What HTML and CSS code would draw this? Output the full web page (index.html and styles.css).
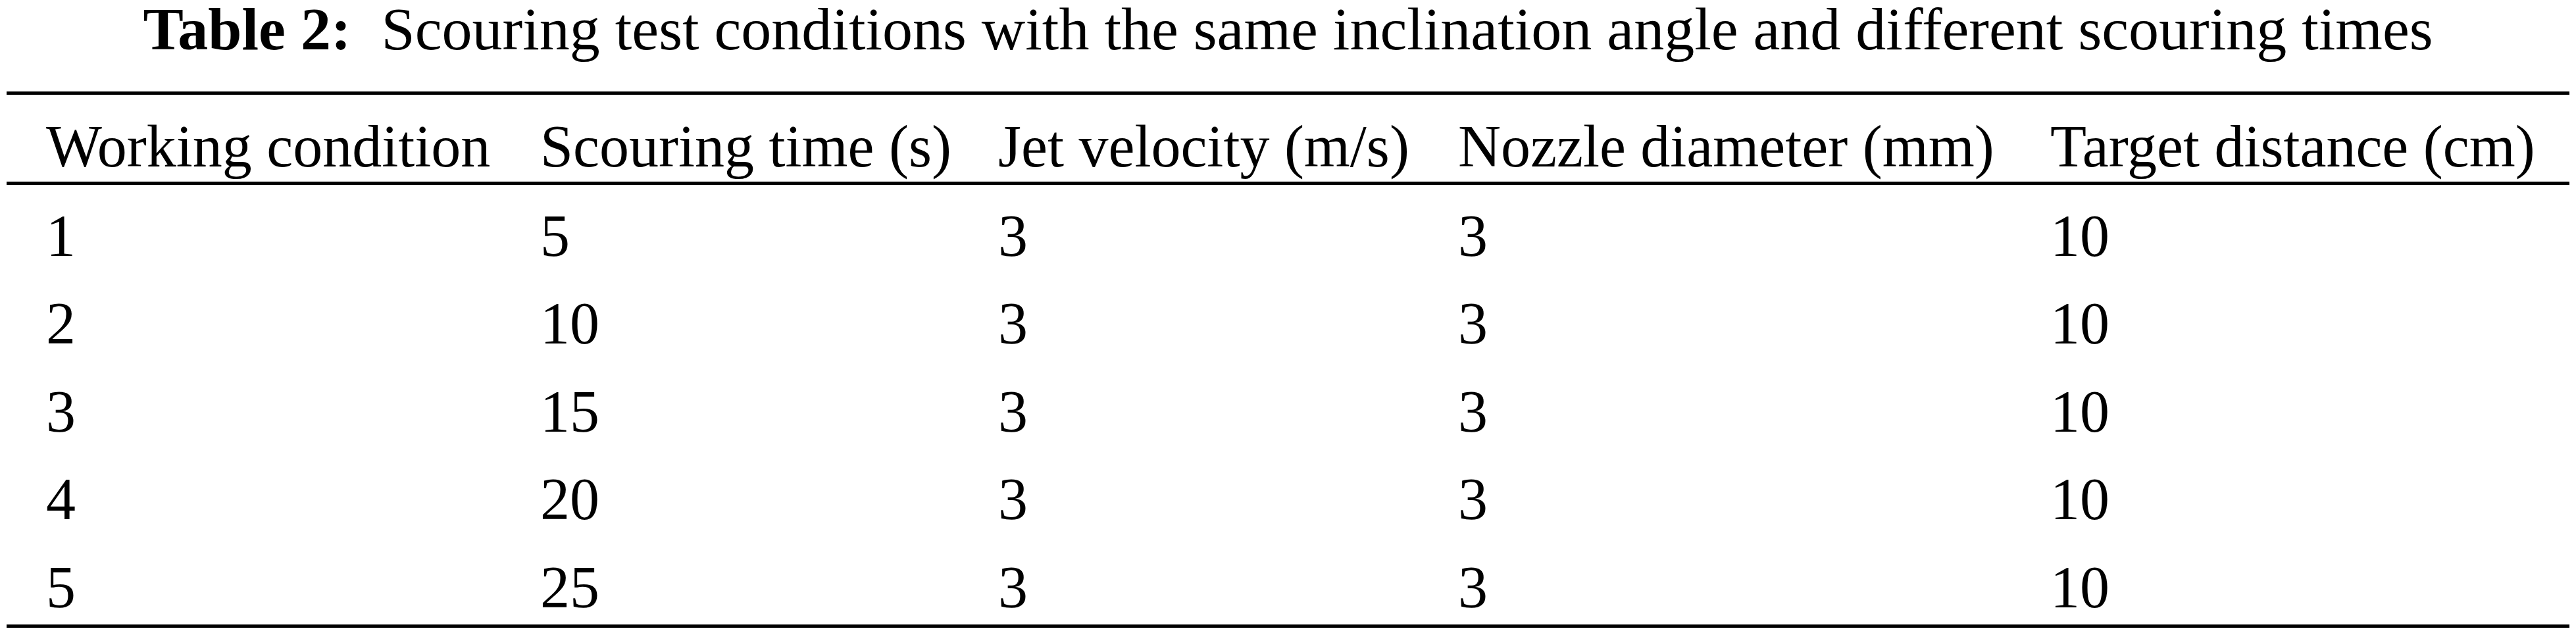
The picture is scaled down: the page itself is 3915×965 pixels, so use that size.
FILE: index.html
```html
<!DOCTYPE html>
<html lang="en">
<head>
    <meta charset="UTF-8">
    <meta name="viewport" content="width=device-width, initial-scale=1.0">
    <title>Table 2</title>
    <link rel="stylesheet" href="styles.css">
</head>
<body>

    <div class="wrap">
        <div class="caption">
            <span class="label">Table 2:</span>Scouring test conditions with the same inclination angle and different scouring times
        </div>

        <table class="data">
            <colgroup>
                <col class="c1">
                <col class="c2">
                <col class="c3">
                <col class="c4">
                <col class="c5">
            </colgroup>
            <thead>
                <tr>
                    <th>Working condition</th>
                    <th>Scouring time (s)</th>
                    <th>Jet velocity (m/s)</th>
                    <th>Nozzle diameter (mm)</th>
                    <th>Target distance (cm)</th>
                </tr>
            </thead>
            <tbody>
                <tr><td>1</td><td>5</td><td>3</td><td>3</td><td>10</td></tr>
                <tr><td>2</td><td>10</td><td>3</td><td>3</td><td>10</td></tr>
                <tr><td>3</td><td>15</td><td>3</td><td>3</td><td>10</td></tr>
                <tr><td>4</td><td>20</td><td>3</td><td>3</td><td>10</td></tr>
                <tr><td>5</td><td>25</td><td>3</td><td>3</td><td>10</td></tr>
            </tbody>
        </table>
    </div>

</body>
</html>
```

FILE: styles.css
```css
* {
    margin: 0;
    padding: 0;
    box-sizing: border-box;
    font-family: "Liberation Serif", "Times New Roman", serif;
}

body {
    background-color: #fff;
    color: #000;
}

.wrap {
    width: 3895px;
    margin-left: 10px;
}

.caption {
    font-size: 92px;
    line-height: 88px;
    text-align: center;
    margin-bottom: 51px;
}

.caption .label {
    font-weight: bold;
    margin-right: 0.5em;
}

table.data {
    width: 100%;
    table-layout: fixed;
    border-collapse: separate;
    border-spacing: 0;
    font-size: 90px;
    line-height: 100px;
}

col.c1 { width: 811px; }
col.c2 { width: 696px; }
col.c3 { width: 699px; }
col.c4 { width: 900px; }
col.c5 { width: 789px; }

th, td {
    text-align: left;
    font-weight: normal;
    white-space: nowrap;
}

th:first-child,
td:first-child {
    padding-left: 60px;
}

th {
    border-top: 5px solid #000;
    border-bottom: 5px solid #000;
    padding-top: 29px;
    padding-bottom: 3px;
}

td {
    padding-top: 27.5px;
    padding-bottom: 6px;
}

tbody tr:last-child td {
    padding-bottom: 6px;
    border-bottom: 5px solid #000;
}
```
